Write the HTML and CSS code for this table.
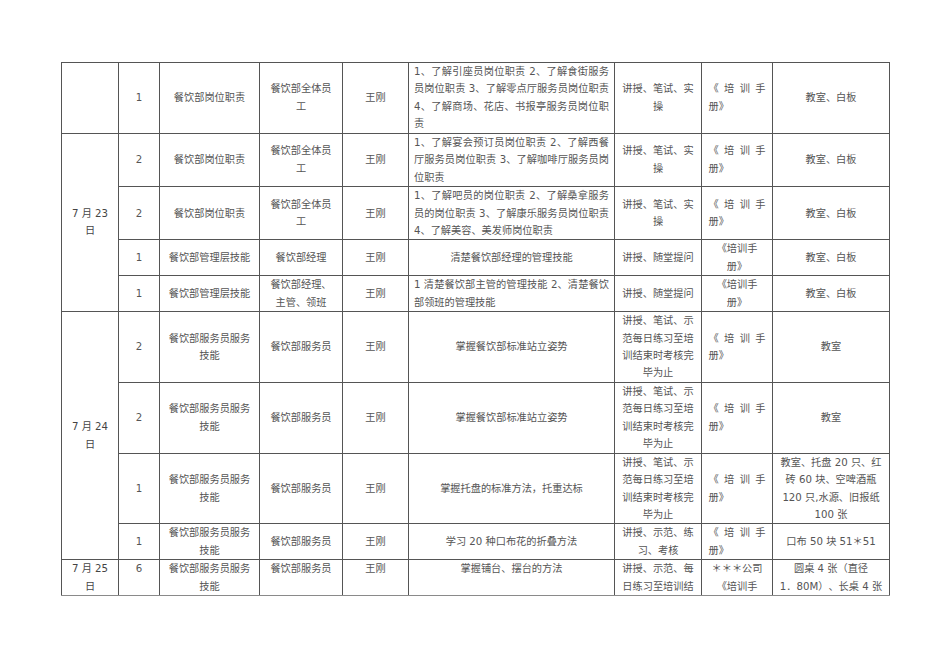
FILE: index.html
```html
<!DOCTYPE html>
<html lang="zh-CN">
<head>
<meta charset="utf-8">
<title>培训计划</title>
<link rel="stylesheet" href="styles.css">
</head>
<body>
<div class="sheet">
<table class="plan">
<colgroup>
<col class="c1"><col class="c2"><col class="c3"><col class="c4"><col class="c5"><col class="c6"><col class="c7"><col class="c8"><col class="c9">
</colgroup>
<tbody>
<tr>
<td class="date"></td>
<td>1</td>
<td>餐饮部岗位职责</td>
<td>餐饮部全体员工</td>
<td>王刚</td>
<td class="j wide">1、了解引座员岗位职责 2、了解食街服务员岗位职责 3、了解零点厅服务员岗位职责 4、了解商场、花店、书报亭服务员岗位职责</td>
<td>讲授、笔试、实操</td>
<td class="j">《培训手册》</td>
<td>教室、白板</td>
</tr>
<tr>
<td class="date" rowspan="4">7 月 23<br>日</td>
<td>2</td>
<td>餐饮部岗位职责</td>
<td>餐饮部全体员工</td>
<td>王刚</td>
<td class="j wide">1、了解宴会预订员岗位职责 2、了解西餐厅服务员岗位职责 3、了解咖啡厅服务员岗位职责</td>
<td>讲授、笔试、实操</td>
<td class="j">《培训手册》</td>
<td>教室、白板</td>
</tr>
<tr>
<td>2</td>
<td>餐饮部岗位职责</td>
<td>餐饮部全体员工</td>
<td>王刚</td>
<td class="j wide">1、了解吧员的岗位职责 2、了解桑拿服务员的岗位职责 3、了解康乐服务员岗位职责 4、了解美容、美发师岗位职责</td>
<td>讲授、笔试、实操</td>
<td class="j">《培训手册》</td>
<td>教室、白板</td>
</tr>
<tr>
<td>1</td>
<td>餐饮部管理层技能</td>
<td>餐饮部经理</td>
<td>王刚</td>
<td class="wide">清楚餐饮部经理的管理技能</td>
<td>讲授、随堂提问</td>
<td>《培训手<br>册》</td>
<td>教室、白板</td>
</tr>
<tr>
<td>1</td>
<td>餐饮部管理层技能</td>
<td>餐饮部经理、<br>主管、领班</td>
<td>王刚</td>
<td class="j wide">1 清楚餐饮部主管的管理技能 2、清楚餐饮部领班的管理技能</td>
<td>讲授、随堂提问</td>
<td>《培训手<br>册》</td>
<td>教室、白板</td>
</tr>
<tr>
<td class="date" rowspan="4">7 月 24<br>日</td>
<td>2</td>
<td>餐饮部服务员服务<br>技能</td>
<td>餐饮部服务员</td>
<td>王刚</td>
<td class="wide">掌握餐饮部标准站立姿势</td>
<td>讲授、笔试、示范每日练习至培训结束时考核完毕为止</td>
<td class="j">《培训手册》</td>
<td>教室</td>
</tr>
<tr>
<td>2</td>
<td>餐饮部服务员服务<br>技能</td>
<td>餐饮部服务员</td>
<td>王刚</td>
<td class="wide">掌握餐饮部标准站立姿势</td>
<td>讲授、笔试、示范每日练习至培训结束时考核完毕为止</td>
<td class="j">《培训手册》</td>
<td>教室</td>
</tr>
<tr>
<td>1</td>
<td>餐饮部服务员服务<br>技能</td>
<td>餐饮部服务员</td>
<td>王刚</td>
<td class="wide">掌握托盘的标准方法，托重达标</td>
<td>讲授、笔试、示范每日练习至培训结束时考核完毕为止</td>
<td class="j">《培训手册》</td>
<td>教室、托盘 20 只、红<br>砖 60 块、空啤酒瓶<br>120 只,水源、旧报纸<br>100 张</td>
</tr>
<tr>
<td>1</td>
<td>餐饮部服务员服务<br>技能</td>
<td>餐饮部服务员</td>
<td>王刚</td>
<td class="wide">学习 20 种口布花的折叠方法</td>
<td>讲授、示范、练习、考核</td>
<td class="j">《培训手册》</td>
<td>口布 50 块 51＊51</td>
</tr>
<tr class="cut">
<td class="date"><div class="clip">7 月 25<br>日</div></td>
<td><div class="clip">6</div></td>
<td><div class="clip">餐饮部服务员服务<br>技能</div></td>
<td><div class="clip">餐饮部服务员</div></td>
<td><div class="clip">王刚</div></td>
<td class="wide"><div class="clip">掌握铺台、摆台的方法</div></td>
<td><div class="clip">讲授、示范、每<br>日练习至培训结</div></td>
<td><div class="clip">＊＊＊公司<br>《培训手</div></td>
<td><div class="clip">圆桌 4 张（直径<br>1．80M）、长桌 4 张</div></td>
</tr>
</tbody>
</table>
</div>
</body>
</html>
```
FILE: styles.css
```css
html, body {
  margin: 0;
  padding: 0;
  background: #ffffff;
}

.sheet {
  padding: 62px 0 0 61px;
}

.plan {
  border-collapse: collapse;
  table-layout: fixed;
  width: 828px;
  font-family: "DejaVu Sans", "Noto Sans CJK SC", sans-serif;
  font-size: 10.2px;
  line-height: 17.43px;
  color: #555555;
  text-spacing-trim: space-all;
}

.c1 { width: 57px; }
.c2 { width: 41px; }
.c3 { width: 100px; }
.c4 { width: 83px; }
.c5 { width: 66px; }
.c6 { width: 206px; }
.c7 { width: 87px; }
.c8 { width: 71px; }
.c9 { width: 117px; }

.plan td {
  border: 1px solid #555555;
  padding: 0 6.5px;
  text-align: center;
  vertical-align: middle;
}

.plan td.wide {
  padding: 0 5px;
}

.plan td.j {
  text-align: justify;
}

.plan td.date {
  padding: 0 2px;
  white-space: nowrap;
  color: #444444;
}

.cut td {
  vertical-align: top;
  border-bottom-color: #8a8a8a;
}

.clip {
  height: 35px;
  overflow: hidden;
}
```
